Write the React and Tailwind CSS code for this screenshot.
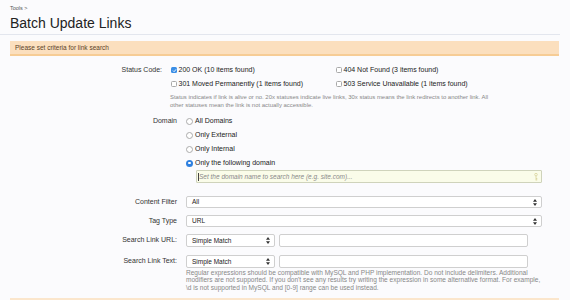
import React from 'react';

const Arrows = () => (
  <svg width="4" height="7" viewBox="0 0 4 7" className="shrink-0">
    <path d="M2 0 L4 2.8 H0 Z M2 7 L4 4.2 H0 Z" fill="#333" />
  </svg>
);

function Checkbox({ checked }) {
  if (checked) {
    return (
      <span className="w-[6px] h-[6px] rounded-[1.5px] bg-[#3a8ee6] flex items-center justify-center shrink-0">
        <svg width="5" height="5" viewBox="0 0 10 10">
          <path d="M2 5.2 L4.2 7.4 L8.2 2.6" stroke="#fff" strokeWidth="1.8" fill="none" />
        </svg>
      </span>
    );
  }
  return <span className="w-[6px] h-[6px] rounded-[1.5px] border border-[#a9a9a9] bg-white shrink-0" />;
}

function Radio({ checked }) {
  if (checked) {
    return (
      <span className="w-[7px] h-[7px] rounded-full bg-[#2f80e0] flex items-center justify-center shrink-0">
        <span className="w-[2.5px] h-[2.5px] rounded-full bg-white" />
      </span>
    );
  }
  return <span className="w-[7px] h-[7px] rounded-full border border-[#ababab] bg-white shrink-0" />;
}

function SelectBox({ value, width }) {
  return (
    <div
      className={`${width} h-full flex items-center justify-between pl-[5px] pr-[4px] bg-white border border-[#cfcfcf] rounded-[2px] text-[6.5px] text-[#222]`}
    >
      <span>{value}</span>
      <Arrows />
    </div>
  );
}

export default function App() {
  return (
    <div className="w-[570px] h-[300px] overflow-hidden bg-[#fbfbfd] font-['Liberation_Sans',Arial,sans-serif] text-[#333]">
      {/* breadcrumb + title */}
      <div className="mt-[5px] h-[6px] pl-[10px] text-[5.5px] leading-[6px] text-[#555]">Tools &gt;</div>
      <h1 className="mt-[4px] h-[16px] pl-[10px] text-[14px] leading-[16px] text-[#222]">Batch Update Links</h1>
      <div className="mt-[3px] h-px w-[560px] bg-[#e3e6ee]" />

      {/* notice */}
      <div className="mt-[6px] ml-[10px] w-[549px] h-[15px] flex items-center pl-[5px] bg-[#fbdfbe] border-b-2 border-[#f6cc95] text-[6.5px] text-[#5a4128]">
        Please set criteria for link search
      </div>

      {/* status code */}
      <div className="mt-[8px] h-[12px] flex items-center text-[7px]">
        <div className="w-[162px] text-right">Status Code:</div>
        <div className="ml-[9px] w-[165px] flex items-center gap-[1.5px]">
          <Checkbox checked />
          <span className="text-[#222]">200 OK (10 items found)</span>
        </div>
        <div className="flex items-center gap-[1.5px]">
          <Checkbox />
          <span className="text-[#222]">404 Not Found (3 items found)</span>
        </div>
      </div>
      <div className="mt-[2px] h-[12px] flex items-center text-[7px]">
        <div className="w-[162px]" />
        <div className="ml-[9px] w-[165px] flex items-center gap-[1.5px]">
          <Checkbox />
          <span className="text-[#222]">301 Moved Permanently (1 items found)</span>
        </div>
        <div className="flex items-center gap-[1.5px]">
          <Checkbox />
          <span className="text-[#222]">503 Service Unavailable (1 items found)</span>
        </div>
      </div>
      <div className="mt-[3px] ml-[170px] text-[5.95px] leading-[8px] text-[#888] whitespace-nowrap">
        Status indicates if link is alive or no. 20x statuses indicate live links, 30x status means the link redirects to another link. All
        <br />
        other statuses mean the link is not actually accessible.
      </div>

      {/* domain */}
      <div className="mt-[5px] flex text-[7px]">
        <div className="w-[177px] h-[14px] flex items-center justify-end">Domain</div>
        <div className="ml-[9px] flex flex-col">
          {[
            ['All Domains', false],
            ['Only External', false],
            ['Only Internal', false],
            ['Only the following domain', true],
          ].map(([label, on]) => (
            <div key={label} className="h-[14px] flex items-center gap-[2px]">
              <Radio checked={on} />
              <span className="text-[#222]">{label}</span>
            </div>
          ))}
          <div className="ml-[10px] w-[346px] h-[13px] flex items-center justify-between pl-[1px] pr-[3px] bg-[#fafce9] border border-[#cfd3bb] rounded-[1px]">
            <div className="flex items-center">
              <span className="w-px h-[8px] bg-[#444]" />
              <span className="italic text-[6.5px] text-[#8a8a8a]">Set the domain name to search here (e.g. site.com)...</span>
            </div>
            <svg width="4" height="8" viewBox="0 0 4 8">
              <circle cx="2" cy="1.6" r="1.3" fill="none" stroke="#d8d39a" strokeWidth="0.8" />
              <path d="M2 3 V7.5 M2 5.5 H3.3 M2 6.8 H3.3" stroke="#d8d39a" strokeWidth="0.8" />
            </svg>
          </div>
        </div>
      </div>

      {/* content filter / tag type */}
      <div className="mt-[13px] h-[12px] flex items-center text-[7px]">
        <div className="w-[177px] text-right">Content Filter</div>
        <div className="ml-[9px] h-full">
          <SelectBox value="All" width="w-[356px]" />
        </div>
      </div>
      <div className="mt-[7px] h-[12px] flex items-center text-[7px]">
        <div className="w-[177px] text-right">Tag Type</div>
        <div className="ml-[9px] h-full">
          <SelectBox value="URL" width="w-[356px]" />
        </div>
      </div>

      {/* search rows */}
      <div className="mt-[7px] h-[13px] flex items-center text-[7px]">
        <div className="w-[177px] text-right">Search Link URL:</div>
        <div className="ml-[9px] h-full flex gap-[3.5px]">
          <SelectBox value="Simple Match" width="w-[89px]" />
          <div className="w-[249px] h-full bg-white border border-[#cfcfcf] rounded-[2px]" />
        </div>
      </div>
      <div className="mt-[8px] h-[13px] flex items-center text-[7px]">
        <div className="w-[177px] text-right">Search Link Text:</div>
        <div className="ml-[9px] h-full flex gap-[3.5px]">
          <SelectBox value="Simple Match" width="w-[89px]" />
          <div className="w-[249px] h-full bg-white border border-[#cfcfcf] rounded-[2px]" />
        </div>
      </div>
      <div className="mt-[1px] ml-[186px] text-[6.55px] leading-[7.3px] text-[#888] whitespace-nowrap">
        Regular expressions should be compatible with MySQL and PHP implementation. Do not include delimiters. Additional
        <br />
        modifiers are not supported. If you don't see any results try writing the expression in some alternative format. For example,
        <br />
        \d is not supported in MySQL and [0-9] range can be used instead.
      </div>
      <div className="mt-[7px] ml-[10px] w-[549px] h-[4px] bg-[#fbe6cc]" />
    </div>
  );
}
